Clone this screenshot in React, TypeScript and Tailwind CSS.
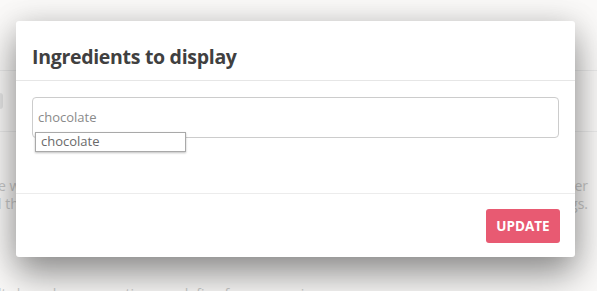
export default function App() {
  return (
    <div className="relative w-[597px] h-[291px] overflow-hidden bg-[#faf9f8] font-['Open_Sans',sans-serif]">
      {/* Page behind the dialog */}
      <div className="flex flex-col text-[14px] text-[#c9c9c9]">
        <div className="h-[71px] border-b border-[#ebebeb]" />
        <div className="h-[61px] border-b border-[#ebebeb] flex items-center">
          <div className="w-[3px] h-[16px] bg-[#e6e6e6] rounded-r-sm" />
        </div>
        <div className="pt-[45px] pl-0 pr-[9px] flex flex-col gap-[1px] leading-[17px]">
          <div className="flex justify-between">
            <span className="-ml-[2px]">e want to help you find other</span>
            <span>find other</span>
          </div>
          <div className="flex justify-between">
            <span className="-ml-[2px]">l things.</span>
            <span>things.</span>
          </div>
        </div>
        <div className="pt-[73px] -ml-[2px] whitespace-nowrap leading-[17px]">
          lts based on properties you define for your recipes.
        </div>
      </div>

      {/* Dialog */}
      <div className="absolute left-[16px] top-[21px] w-[559px] bg-white rounded-[3px] shadow-[0_18px_36px_rgba(0,0,0,0.4),0_0_30px_rgba(0,0,0,0.12)] flex flex-col">
        <div className="h-[60px] px-4 flex items-end pb-[9px] border-b border-[#e6e6e6]">
          <h2 className="text-[19.5px] font-bold text-[#404040] tracking-[-0.3px]">Ingredients to display</h2>
        </div>
        <div className="relative px-4 pt-[16px] h-[113px] border-b border-[#ececec]">
          <div className="h-[41px] border border-[#cccccc] rounded-[4px] flex items-center px-[5px] text-[13px] text-[#8a8a8a]">
            chocolate
          </div>
          <div className="absolute left-[19px] top-[51px] w-[151px] h-[20px] bg-white border border-[#a9a9a9] shadow-[0_1px_2px_rgba(0,0,0,0.25)] flex items-center px-[5px] text-[13px] text-[#6a6a6a]">
            chocolate
          </div>
        </div>
        <div className="h-[63px] px-[15px] flex items-center justify-end">
          <button className="w-[74px] h-[34px] mt-[1px] rounded-[3px] bg-[#e85a72] text-white text-[13.5px] font-bold">
            UPDATE
          </button>
        </div>
      </div>
    </div>
  );
}
